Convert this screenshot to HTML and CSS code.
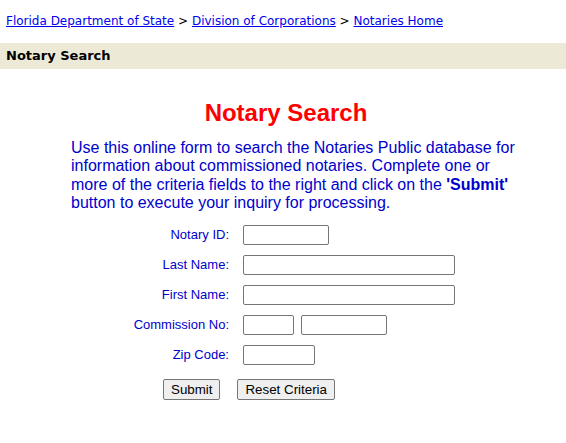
FILE: index.html
```html
<!DOCTYPE html>
<html lang="en">
<head>
  <meta charset="UTF-8" />
  <title>Notary Search</title>
  <link rel="stylesheet" href="styles.css">
</head>
<body>

  <!-- breadcrumb trail -->
  <div class="crumbs">
    <a href="#">Florida Department of State</a> &gt;
    <a href="#">Division of Corporations</a> &gt;
    <a href="#">Notaries Home</a>
  </div>

  <div class="page-bar">Notary Search</div>

  <div class="content">
    <h1>Notary Search</h1>
    <p class="intro">Use this online form to search the Notaries Public database for information about commissioned notaries. Complete one or more of the criteria fields to the right and click on the <strong>'Submit'</strong> button to execute your inquiry for processing.</p>

    <form class="search-form" onsubmit="return false;">
      <label for="notaryId">Notary ID:</label>
      <div><input type="text" id="notaryId" class="w-id"></div>

      <label for="lastName">Last Name:</label>
      <div><input type="text" id="lastName" class="w-name"></div>

      <label for="firstName">First Name:</label>
      <div><input type="text" id="firstName" class="w-name"></div>

      <label for="commNo">Commission No:</label>
      <div class="pair">
        <input type="text" id="commNo" class="w-prefix">
        <input type="text" class="w-id">
      </div>

      <label for="zip">Zip Code:</label>
      <div><input type="text" id="zip" class="w-zip"></div>

      <div class="buttons">
        <button type="submit">Submit</button>
        <button type="reset">Reset Criteria</button>
      </div>
    </form>
  </div>

</body>
</html>
```

FILE: styles.css
```css
body {
  margin: 0;
  padding: 0;
  background: #ffffff;
  font-family: "DejaVu Sans", Verdana, sans-serif;
}

.crumbs {
  padding: 14px 6px 0;
  height: 43px;
  box-sizing: border-box;
  font-size: 12px;
  color: #000000;
}

.crumbs a {
  color: #0000ee;
}

.page-bar {
  background: #ecead7;
  height: 26px;
  line-height: 26px;
  padding: 0 6px;
  font-size: 13px;
  font-weight: bold;
  color: #000000;
}

.content {
  margin-left: 71px;
  width: 450px;
  font-family: "Liberation Sans", Arial, sans-serif;
}

h1 {
  width: 430px;
  margin: 30px 0 0;
  text-align: center;
  font-size: 24px;
  line-height: 28px;
  color: #ff0000;
}

.intro {
  margin: 12px 0 0;
  font-size: 16px;
  line-height: 18.4px;
  color: #0000cc;
}

.intro strong {
  color: #0000cc;
}

.search-form {
  display: grid;
  grid-template-columns: 158px 1fr;
  column-gap: 14px;
  row-gap: 10px;
  margin-top: 12px;
  align-items: center;
}

.search-form label {
  text-align: right;
  font-size: 13px;
  color: #0000cc;
}

.search-form input {
  display: block;
  height: 20px;
  box-sizing: border-box;
  border: 1px solid #767676;
  border-radius: 2px;
  padding: 1px 2px;
  margin: 0;
}

.pair {
  display: flex;
  gap: 7px;
}

.w-id { width: 86px; }
.w-name { width: 212px; }
.w-prefix { width: 51px; }
.w-zip { width: 72px; }

.buttons {
  grid-column: 1 / 3;
  display: flex;
  gap: 17px;
  padding-left: 92px;
  margin-top: 4px;
}

.buttons button {
  height: 21px;
  font-family: "Liberation Sans", Arial, sans-serif;
  font-size: 13.33px;
  padding: 0 7px;
  border: 1px solid #767676;
  border-radius: 2px;
  background: #efefef;
  color: #000000;
}
```
